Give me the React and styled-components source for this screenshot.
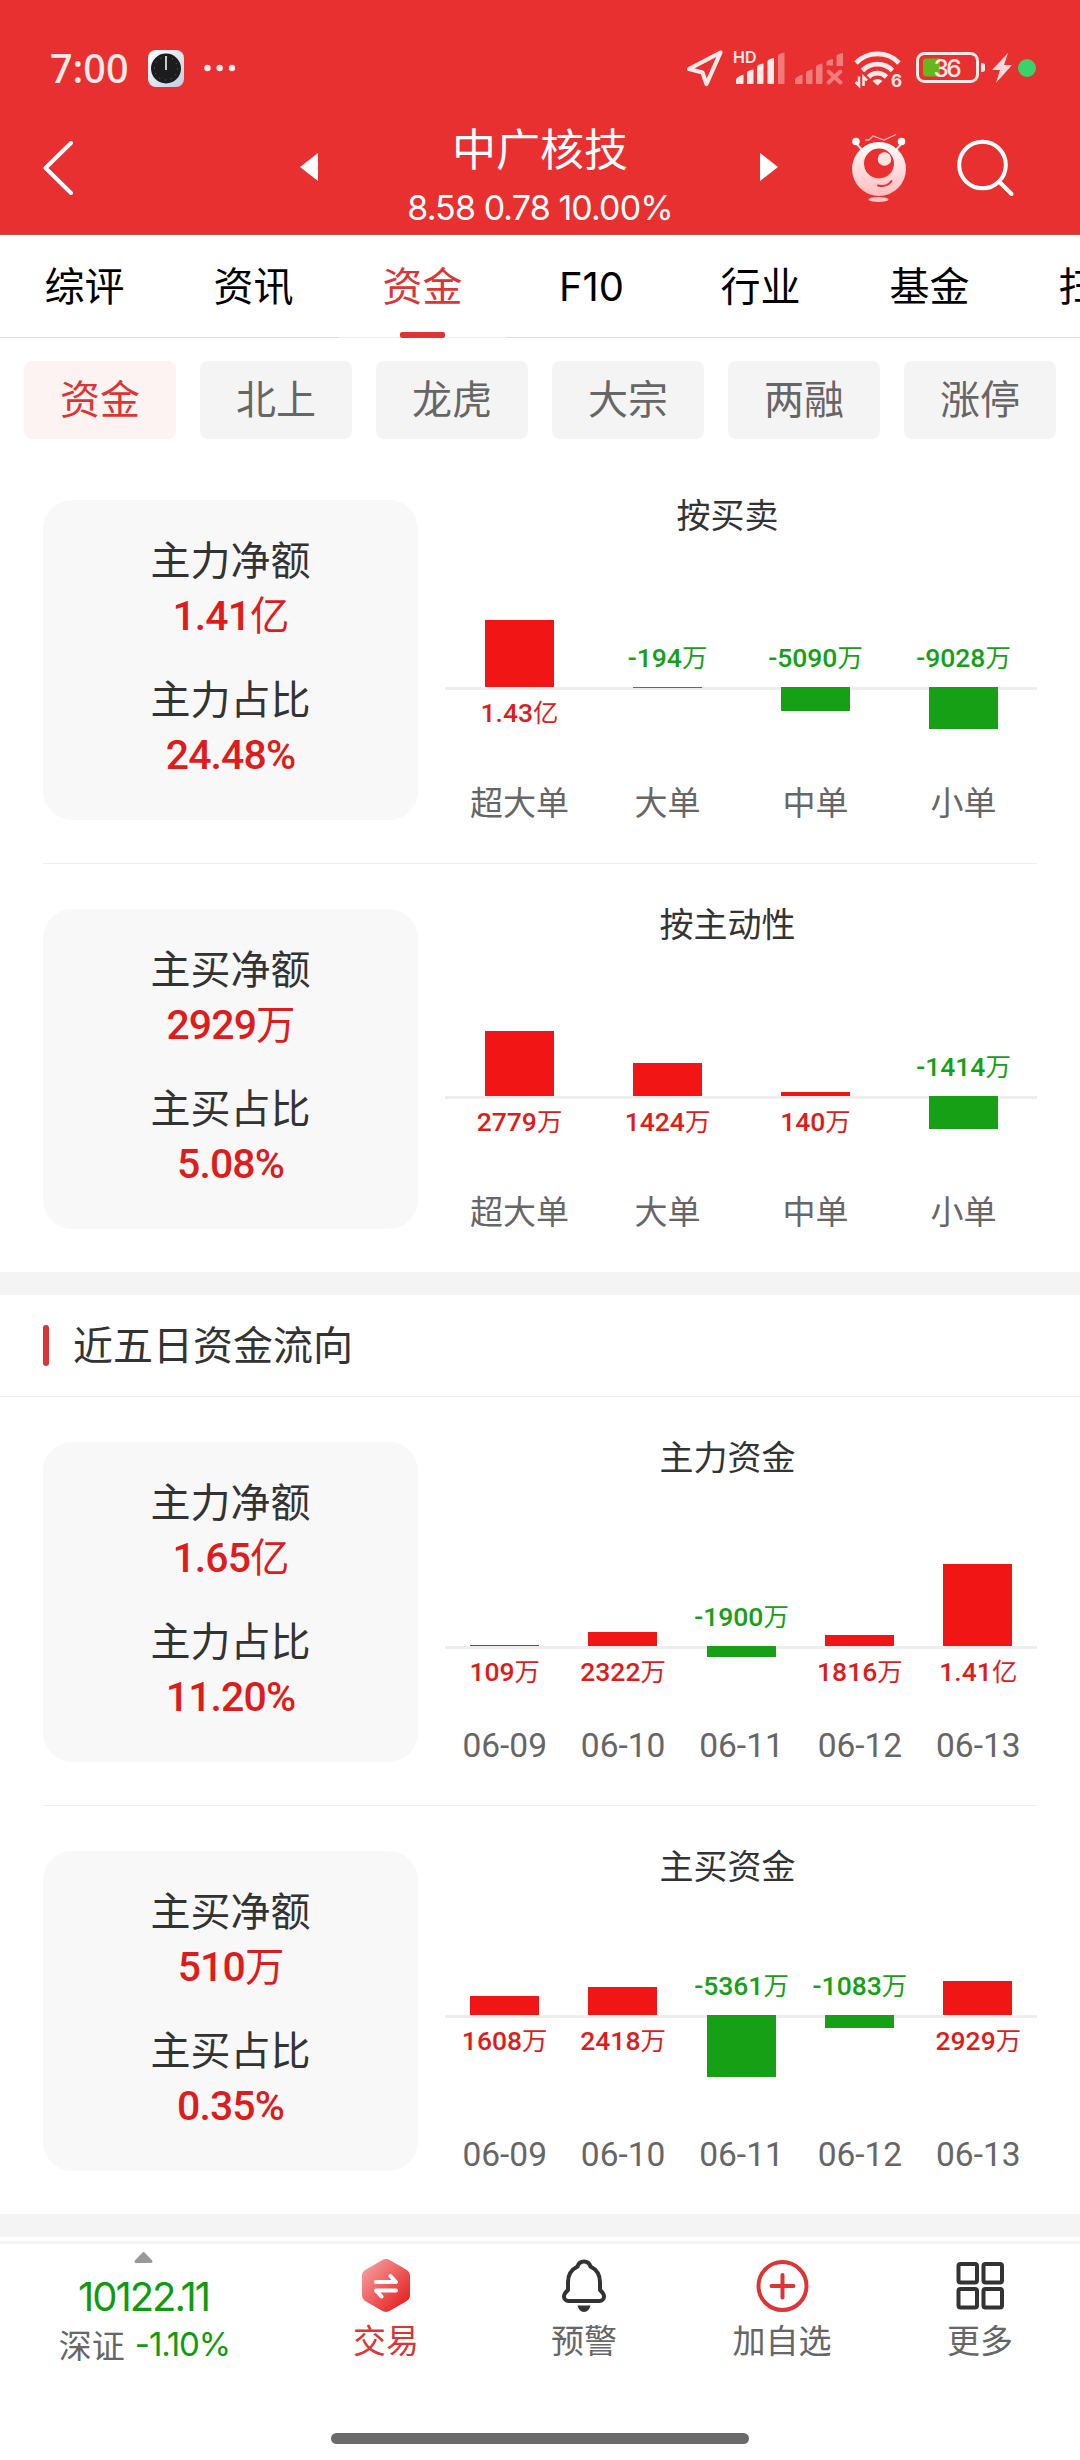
import React from 'react';
import styled, { createGlobalStyle } from 'styled-components';

const RED = '#e93030';
const UP = '#de1c1c';
const DOWN = '#16a016';

const cjk = "'Noto Sans CJK SC', sans-serif";

const GlobalStyle = createGlobalStyle`
  * {
    box-sizing: border-box;
  }
  body {
    margin: 0;
    background: #fff;
    font-family: ${cjk};
    color: #333;
  }
  svg {
    display: block;
    flex: none;
    overflow: visible;
  }
`;

const Page = styled.div`
  width: 1080px;
  height: 2460px;
  overflow: hidden;
  display: flex;
  flex-direction: column;
  background: #fff;
`;

// Header

const Header = styled.header`
  height: 235px;
  background: ${RED};
  border-bottom: 1px solid #c24a4a;
  color: #fff;
`;

const StatusBar = styled.div`
  height: 100px;
  padding: 36px 44px 0 50px;
  display: flex;
  justify-content: space-between;
`;

const StatusGroup = styled.div`
  height: 64px;
  display: flex;
  align-items: center;
  gap: ${(p) => p.$gap || 0}px;
`;

const Time = styled.span`
  width: 78px;
  font: 500 39.5px/62px 'Noto Sans', sans-serif;
  letter-spacing: 0;
  color: #ffe9e9;
`;

const NavBar = styled.div`
  height: 134px;
  padding-left: 43px;
  display: flex;

  > svg {
    margin-top: 39px;
  }
`;

const StockTitle = styled.div`
  width: 442px;
  padding-left: 2px;
  text-align: center;
`;

const StockName = styled.h1`
  margin: 16px 0 0;
  font-size: 44px;
  font-weight: 400;
  line-height: 62px;
`;

const StockQuote = styled.p`
  margin: 8px 0 0;
  font: 400 34px/44px Inter, sans-serif;
  letter-spacing: -0.9px;
`;

// Tabs

const Tabs = styled.nav`
  height: 103px;
  flex: none;
  display: flex;
  overflow: hidden;
`;

const Tab = styled.div`
  flex: none;
  width: 169px;
  display: flex;
  flex-direction: column;
  align-items: center;
  justify-content: space-between;
  border-bottom: 1px solid ${(p) => (p.$active ? '#eee' : '#ddd')};
  font-family: Inter, ${cjk};
  font-size: 40px;
  line-height: 103px;
  color: ${(p) => (p.$active ? '#db3535' : '#000')};

  &::after {
    content: '';
    width: 45px;
    height: 6px;
    margin-top: -7px;
    margin-bottom: -1px;
    border-radius: 2px;
    background: ${(p) => (p.$active ? '#e13333' : 'transparent')};
  }
`;

const Chips = styled.div`
  display: flex;
  flex: none;
  gap: 24px;
  padding: 23px 24px 0;
`;

const Chip = styled.div`
  width: 152px;
  height: 78px;
  border-radius: 8px;
  font-size: 40px;
  line-height: 73px;
  text-align: center;
  background: ${(p) => (p.$active ? '#fef3f3' : '#f4f4f4')};
  color: ${(p) => (p.$active ? '#db3535' : '#666')};
`;

// Fund flow blocks

const Block = styled.section`
  flex: none;
  height: ${(p) => p.$height}px;
  margin: 0 43px;
  padding-top: ${(p) => p.$top}px;
  display: flex;
  gap: 27px;
  border-bottom: ${(p) => (p.$divider ? '1px solid #eee' : 'none')};
`;

const Card = styled.div`
  width: 375px;
  height: 320px;
  padding-top: 28px;
  border-radius: 29px;
  background: #f8f8f8;
  text-align: center;
`;

const CardLabel = styled.div`
  font-size: 40px;
  line-height: 60px;
`;

const CardValue = styled.div`
  margin-top: 2px;
  margin-bottom: 24px;
  font-family: Roboto, ${cjk};
  font-size: 41px;
  font-weight: 500;
  line-height: 52px;
  letter-spacing: -0.9px;
  color: ${UP};
`;

const Unit = styled.span`
  font-weight: 400;
  font-size: 0.96em;
`;

const ChartBox = styled.div`
  width: 592px;
  height: 320px;
  display: flex;
  flex-direction: column;
`;

const ChartTitle = styled.h2`
  height: 32px;
  margin: 0;
  padding-right: 27px;
  font-size: 34px;
  font-weight: 400;
  line-height: 28px;
  text-align: center;
`;

const Half = styled.div`
  display: flex;
  align-items: ${(p) => (p.$upper ? 'flex-end' : 'flex-start')};
  ${(p) => (p.$upper ? '' : 'flex: 1; box-shadow: inset 0 3px #eee;')}
`;

const Cell = styled.div`
  flex: 1;
  display: flex;
  justify-content: center;
`;

const Bar = styled.div`
  width: 69px;
  background: ${(p) => (p.$up ? '#f11515' : DOWN)};
`;

const BarLabel = styled.span`
  margin: ${(p) => (p.$up ? '10px -10px 0 -9px' : '0 -10px 13px -9px')};
  font-family: Roboto, ${cjk};
  font-size: 26.5px;
  font-weight: 500;
  line-height: 32px;
  white-space: nowrap;
  color: ${(p) => (p.$up ? UP : DOWN)};
`;

const Category = styled.span`
  flex: 1;
  height: 36px;
  padding-left: 1px;
  font-family: ${(p) => (p.$date ? 'Roboto, sans-serif' : cjk)};
  font-size: ${(p) => (p.$date ? 33.5 : 33)}px;
  line-height: ${(p) => (p.$date ? 40 : 34)}px;
  text-align: center;
  color: #666;
`;

const CategoryRow = styled.div`
  display: flex;
`;

const Band = styled.div`
  flex: none;
  height: 23px;
  background: #f4f4f4;
`;

const SectionHead = styled.div`
  flex: none;
  height: 102px;
  padding-left: 43px;
  display: flex;
  align-items: center;
  gap: 24px;
  border-bottom: 1px solid #eee;

  &::before {
    content: '';
    width: 6px;
    height: 41px;
    border-radius: 3px;
    background: #d93636;
  }
`;

const SectionTitle = styled.h2`
  height: 62px;
  margin: 0;
  font-size: 40px;
  font-weight: 400;
  line-height: 57px;
`;

// Bottom bar

const BottomBar = styled.footer`
  flex: none;
  height: 189px;
  margin-top: 4px;
  display: flex;
  border-top: 3px solid #f4f4f4;
`;

const IndexBlock = styled.div`
  width: 287px;
  padding-top: 8px;
  display: flex;
  flex-direction: column;
  align-items: center;
`;

const IndexPoint = styled.div`
  margin-top: 9px;
  font: 400 40px/50px Inter, sans-serif;
  letter-spacing: -2px;
  color: #0f9b0f;
`;

const IndexChange = styled.div`
  display: flex;
  gap: 10px;
  margin-left: 2px;
  font-size: 33px;
  line-height: 44px;
  color: #666;

  em {
    font-family: Inter, sans-serif;
    font-style: normal;
    letter-spacing: -1.1px;
    color: #0f9b0f;
  }
`;

const Action = styled.div`
  width: 198px;
  padding-top: 14px;
  display: flex;
  flex-direction: column;
  align-items: center;
  font-size: 33px;
  line-height: 50px;
  color: ${(p) => (p.$active ? '#db3535' : '#666')};
`;

const HomeIndicator = styled.div`
  flex: none;
  width: 418px;
  height: 11px;
  margin: 3px auto 0;
  border-radius: 6px;
  background: #6a6a6a;
`;

// Icons

const ClockIcon = () => (
  <svg width="36" height="37" viewBox="0 0 36 37">
    <defs>
      <linearGradient id="clockBg" x1="0" y1="0" x2="1" y2="1">
        <stop offset="0" stopColor="#fff" />
        <stop offset="1" stopColor="#c3cce0" />
      </linearGradient>
    </defs>
    <rect width="36" height="37" rx="8" fill="url(#clockBg)" />
    <circle cx="18" cy="18.5" r="15" fill="#1c1c1e" />
    <circle cx="18" cy="18.5" r="11.5" fill="none" stroke="#777" strokeWidth="1" strokeDasharray="1 5.02" />
    <path d="M18 6v14" stroke="#c9c9c9" strokeWidth="2" />
  </svg>
);

const DotsIcon = () => (
  <svg width="32" height="8" viewBox="0 0 32 8" fill="#ffe9e9">
    <circle cx="3.5" cy="4" r="3.2" />
    <circle cx="15.7" cy="4" r="3.2" />
    <circle cx="28" cy="4" r="3.2" />
  </svg>
);

const LocationIcon = () => (
  <svg width="38" height="38" viewBox="0 0 38 38">
    <path d="M34.5 3.5L3 20l13.5 3.5L20.5 35z" fill="none" stroke="#ffe9e9" strokeWidth="4.2" strokeLinejoin="round" />
  </svg>
);

const SignalIcon = () => (
  <svg width="51" height="34" viewBox="0 0 51 34" fill="#ffe9e9">
    <text x="-1" y="12" fontFamily="Inter, sans-serif" fontSize="16" fontWeight="600">HD</text>
    <path d="M2 32v-3q0-3 7.5-5.500v8.500q0 1-1 1h-5.500q-1 0-1-1zM13 22q0-2.500 6.500-3.500v13.500q0 1-1 1h-4.500q-1 0-1-1zM23 16q0-2.500 6.500-3.500v19.500q0 1-1 1h-4.500q-1 0-1-1zM33.500 10.500q0-2.500 6.500-3.500v25q0 1-1 1h-4.500q-1 0-1-1z" />
    <path opacity="0.4" d="M44 5q0-2.500 6.500-3.500v30.500q0 1-1 1h-4.500q-1 0-1-1z" />
  </svg>
);

const NoSignalIcon = () => (
  <svg width="49" height="34" viewBox="0 0 49 34" fill="#f47b7b">
    <path d="M0 32v-3q0-3 7.500-5.500v8.500q0 1-1 1h-5.500q-1 0-1-1zM11 22q0-2.500 6.500-3.500v13.500q0 1-1 1h-4.500q-1 0-1-1zM21 16q0-2.500 6.500-3.500v19.500q0 1-1 1h-4.500q-1 0-1-1zM31.500 11.500q0-2.500 6.500-3.500v6.500h-6.500zM41.500 5.500q0-2.500 6.500-3.500v13h-6.500z" />
    <path d="M33.500 20.500l12 11m0-11l-12 11" stroke="#f47b7b" strokeWidth="4" strokeLinecap="round" />
  </svg>
);

const WifiIcon = () => (
  <svg width="48" height="38" viewBox="0 0 48 38">
    <g fill="none" stroke="#ffe9e9" strokeWidth="4.8">
      <path d="M2 14a30 30 0 0 1 43 0" />
      <path d="M8.500 21.500a21 21 0 0 1 30 0" />
      <path d="M14.500 28a12.500 12.500 0 0 1 18 0" />
    </g>
    <path d="M18.500 32q5-4 10 0l-5 4.500z" fill="#ffe9e9" />
    <path d="M5 27.500v9l-3.500-3.500M9.500 37v-9l3.500 3.500" fill="none" stroke="#ffe9e9" strokeWidth="2.5" />
    <text x="37" y="37.500" fill="#ffe9e9" fontFamily="Inter, sans-serif" fontSize="17" fontWeight="700">6</text>
  </svg>
);

const BatterySvg = styled.svg`
  margin-left: 4px;
  margin-right: -4px;
`;

const BatteryIcon = () => (
  <BatterySvg width="70" height="32" viewBox="0 0 70 32">
    <rect x="1.5" y="1.5" width="60" height="28" rx="7" fill="none" stroke="#ffe9e9" strokeWidth="3" />
    <path d="M65 11q4 0 4 2v5q0 2-4 2z" fill="#ffe9e9" />
    <path d="M10 6.500h14v18h-14q-3 0-3-3v-12q0-3 3-3z" fill="#66b81a" />
    <text x="17.5" y="24.500" fill="#ffe9e9" fontFamily="Inter, sans-serif" fontSize="24.500" fontWeight="500" letterSpacing="-2.500">36</text>
  </BatterySvg>
);

const BoltIcon = () => (
  <svg width="20" height="30" viewBox="0 0 20 30" fill="#ffdada">
    <path d="M16 0L0 17h8L4 30l16-18h-8z" />
  </svg>
);

const RecordDot = styled.i`
  width: 18px;
  height: 18px;
  margin-left: 6px;
  border-radius: 50%;
  background: #38d46b;
`;

const BackIcon = () => (
  <svg width="30" height="58" viewBox="0 0 30 58">
    <path d="M28 4L2.500 29L28 54" fill="none" stroke="#fff" strokeWidth="4" strokeLinecap="round" strokeLinejoin="round" />
  </svg>
);

const Arrow = styled.i`
  flex: none;
  width: 18px;
  height: 28px;
  margin-top: 53px;
  margin-left: ${(p) => (p.$left ? 227 : 0)}px;
  background: #fff;
  clip-path: ${(p) => (p.$left ? 'polygon(0 50%, 100% 0, 100% 100%)' : 'polygon(0 0, 100% 50%, 0 100%)')};
`;

const RobotSvg = styled.svg`
  margin-left: 74px;
  && {
    margin-top: 34px;
  }
`;

const RobotIcon = () => (
  <RobotSvg width="54" height="70" viewBox="0 0 54 70">
    <defs>
      <linearGradient id="robot" x1="0" y1="0" x2="0" y2="1">
        <stop offset="0" stopColor="#fff" />
        <stop offset="1" stopColor="#ffbcbc" />
      </linearGradient>
    </defs>
    <path d="M4 9l7 8M50 9l-7 8" stroke="#ffe3e3" strokeWidth="2" />
    <circle cx="4" cy="7.5" r="3.8" fill="#fff" />
    <circle cx="49.5" cy="7.5" r="3.8" fill="#fff" />
    <path d="M13 6h4l4-4 11 4 12-5.500" fill="none" stroke="#ffb5b5" strokeWidth="1.3" />
    <circle cx="27" cy="35" r="27" fill="url(#robot)" />
    <circle cx="27" cy="29.5" r="15" fill={RED} />
    <circle cx="32.5" cy="25" r="6.8" fill="#ffe3e3" />
    <path d="M26 51.500q9 2 13.500-4.500" fill="none" stroke={RED} strokeWidth="2" strokeLinecap="round" />
    <ellipse cx="26.5" cy="65.5" rx="10" ry="2.5" fill="#ffc4c4" />
  </RobotSvg>
);

const SearchSvg = styled.svg`
  margin-left: 51px;
`;

const SearchIcon = () => (
  <SearchSvg width="58" height="58" viewBox="0 0 58 58" fill="none" stroke="#fff" strokeWidth="4" strokeLinecap="round">
    <circle cx="25.5" cy="26" r="23.3" />
    <path d="M42.500 43L54.500 55" />
  </SearchSvg>
);

const CaretIcon = () => (
  <svg width="19" height="11" viewBox="0 0 19 11">
    <path d="M9.500 1.500L17 9.500H2z" fill="#999" stroke="#999" strokeWidth="3" strokeLinejoin="round" />
  </svg>
);

const TradeIcon = () => (
  <svg width="56" height="56" viewBox="0 0 56 56">
    <defs>
      <linearGradient id="trade" x1="0.1" y1="0.1" x2="0.9" y2="0.9">
        <stop offset="0" stopColor="#f69b9b" />
        <stop offset="1" stopColor="#e61f1f" />
      </linearGradient>
    </defs>
    <path d="M24 2.200q4-2.200 8 0l16 9.300q4 2.300 4 6.500v19q0 4.200-4 6.500l-16 9.300q-4 2.200-8 0l-16-9.300q-4-2.300-4-6.500v-19q0-4.200 4-6.500z" fill="url(#trade)" />
    <path d="M18 24h20l-5.500-6M38 32.500H18l5.500 6" fill="none" stroke="#fff" strokeWidth="4" strokeLinecap="round" strokeLinejoin="round" />
  </svg>
);

const BellIcon = () => (
  <svg width="56" height="56" viewBox="0 0 56 56">
    <path
      d="M28 3.500c-3.500 0-5.500 2-6.500 5C15.500 11.500 12 17 12 24v8c-2 2-4 3.500-4 6.500 0 2.500 2 4.500 4.500 4.500h31c2.500 0 4.500-2 4.500-4.500 0-3-2-4.500-4-6.500v-8c0-7-3.500-12.500-9.500-15.500-1-3-3-5-6.500-5z"
      fill="none"
      stroke="#333"
      strokeWidth="4"
      strokeLinejoin="round"
    />
    <path d="M21.500 47.500h13q-1.500 6.500-6.500 6.500t-6.500-6.500z" fill="#333" />
  </svg>
);

const AddIcon = () => (
  <svg width="56" height="56" viewBox="0 0 56 56" fill="none" stroke="#dc3535" strokeWidth="4" strokeLinecap="round">
    <circle cx="28.5" cy="28" r="24" />
    <path d="M17.500 28h22M28.500 17v22.500" />
  </svg>
);

const MoreIcon = () => (
  <svg width="56" height="56" viewBox="0 0 56 56" fill="none" stroke="#333" strokeWidth="4">
    <rect x="6.5" y="6" width="18.5" height="18.5" rx="2" />
    <rect x="31.5" y="6" width="18.5" height="18.5" rx="2" />
    <rect x="6.5" y="31" width="18.5" height="18.5" rx="2" />
    <rect x="31.5" y="31" width="18.5" height="18.5" rx="2" />
  </svg>
);

// Data: [category, value label, bar height in px (negative = outflow)]

const byTrade = [
  ['超大单', '1.43亿', 67],
  ['大单', '-194万', -1],
  ['中单', '-5090万', -24],
  ['小单', '-9028万', -42],
];

const byActive = [
  ['超大单', '2779万', 65],
  ['大单', '1424万', 33],
  ['中单', '140万', 4],
  ['小单', '-1414万', -33],
];

const mainFlow = [
  ['06-09', '109万', 1],
  ['06-10', '2322万', 14],
  ['06-11', '-1900万', -11],
  ['06-12', '1816万', 11],
  ['06-13', '1.41亿', 82],
];

const buyFlow = [
  ['06-09', '1608万', 19],
  ['06-10', '2418万', 28],
  ['06-11', '-5361万', -62],
  ['06-12', '-1083万', -13],
  ['06-13', '2929万', 34],
];

const Amount = ({ text }) => {
  const unit = /[亿万]$/.test(text) ? text.slice(-1) : '';
  return (
    <>
      {unit ? text.slice(0, -1) : text}
      {unit && <Unit>{unit}</Unit>}
    </>
  );
};

const Chart = ({ title, data, base }) => (
  <ChartBox>
    <ChartTitle>{title}</ChartTitle>
    <Half $upper style={{ height: base - 32 }}>
      {data.map(([name, label, h]) => (
        <Cell key={name}>
          {h > 0 ? <Bar $up style={{ height: h }} /> : <BarLabel><Amount text={label} /></BarLabel>}
        </Cell>
      ))}
    </Half>
    <Half>
      {data.map(([name, label, h]) => (
        <Cell key={name}>
          {h > 0 ? <BarLabel $up><Amount text={label} /></BarLabel> : <Bar style={{ height: -h }} />}
        </Cell>
      ))}
    </Half>
    <CategoryRow>
      {data.map(([name]) => (
        <Category key={name} $date={name.includes('-')}>{name}</Category>
      ))}
    </CategoryRow>
  </ChartBox>
);

const FlowBlock = ({ items, title, data, base, ...rest }) => (
  <Block {...rest}>
    <Card>
      {items.map(([label, value]) => (
        <React.Fragment key={label}>
          <CardLabel>{label}</CardLabel>
          <CardValue><Amount text={value} /></CardValue>
        </React.Fragment>
      ))}
    </Card>
    <Chart title={title} data={data} base={base} />
  </Block>
);

const tabs = ['综评', '资讯', '资金', 'F10', '行业', '基金', '扫雷'];
const chips = ['资金', '北上', '龙虎', '大宗', '两融', '涨停'];

const App = () => (
  <Page>
    <GlobalStyle />
    <Header>
      <StatusBar>
        <StatusGroup $gap={20}>
          <Time>7:00</Time>
          <ClockIcon />
          <DotsIcon />
        </StatusGroup>
        <StatusGroup $gap={10}>
          <LocationIcon />
          <SignalIcon />
          <NoSignalIcon />
          <WifiIcon />
          <BatteryIcon />
          <StatusGroup>
            <BoltIcon />
            <RecordDot />
          </StatusGroup>
        </StatusGroup>
      </StatusBar>
      <NavBar>
        <BackIcon />
        <Arrow $left />
        <StockTitle>
          <StockName>中广核技</StockName>
          <StockQuote>8.58 0.78 10.00%</StockQuote>
        </StockTitle>
        <Arrow />
        <RobotIcon />
        <SearchIcon />
      </NavBar>
    </Header>

    <Tabs>
      {tabs.map((t) => (
        <Tab key={t} $active={t === '资金'}>{t}</Tab>
      ))}
    </Tabs>
    <Chips>
      {chips.map((c, i) => (
        <Chip key={c} $active={i === 0}>{c}</Chip>
      ))}
    </Chips>

    <FlowBlock
      $height={425}
      $top={61}
      $divider
      items={[['主力净额', '1.41亿'], ['主力占比', '24.48%']]}
      title="按买卖"
      data={byTrade}
      base={187}
    />
    <FlowBlock
      $height={408}
      $top={45}
      items={[['主买净额', '2929万'], ['主买占比', '5.08%']]}
      title="按主动性"
      data={byActive}
      base={187}
    />

    <Band />
    <SectionHead>
      <SectionTitle>近五日资金流向</SectionTitle>
    </SectionHead>

    <FlowBlock
      $height={409}
      $top={45}
      $divider
      items={[['主力净额', '1.65亿'], ['主力占比', '11.20%']]}
      title="主力资金"
      data={mainFlow}
      base={204}
    />
    <FlowBlock
      $height={408}
      $top={45}
      items={[['主买净额', '510万'], ['主买占比', '0.35%']]}
      title="主买资金"
      data={buyFlow}
      base={164}
    />
    <Band />

    <BottomBar>
      <IndexBlock>
        <CaretIcon />
        <IndexPoint>10122.11</IndexPoint>
        <IndexChange>深证<em>-1.10%</em></IndexChange>
      </IndexBlock>
      <Action $active>
        <TradeIcon />
        交易
      </Action>
      <Action>
        <BellIcon />
        预警
      </Action>
      <Action>
        <AddIcon />
        加自选
      </Action>
      <Action>
        <MoreIcon />
        更多
      </Action>
    </BottomBar>
    <HomeIndicator />
  </Page>
);

export default App;
